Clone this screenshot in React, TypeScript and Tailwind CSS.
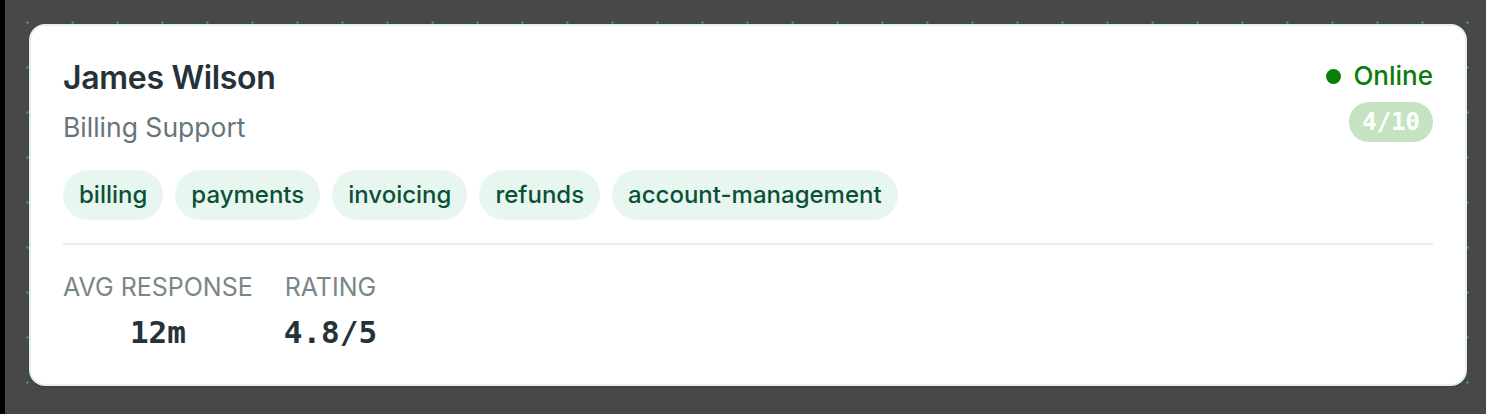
const tags = ['billing', 'payments', 'invoicing', 'refunds', 'account-management']

const stats = [
  { label: 'AVG RESPONSE', value: '12m' },
  { label: 'RATING', value: '4.8/5' },
]

export default function App() {
  return (
    <div
      className="h-[414px] w-full border-l-[5px] border-black bg-[#484848] bg-[radial-gradient(circle,#3b9078_1px,transparent_1.5px)] bg-[length:45px_45px] pt-6 pl-6"
      style={{ fontFamily: 'Inter, "Noto Sans", sans-serif' }}
    >
      <div className="w-[1438px] rounded-[16px] border-2 border-[#e4f0ed] bg-white p-8 pb-[34px] shadow-sm">
        {/* Шапка: имя, роль и статус */}
        <div className="flex items-start justify-between">
          <div>
            <h2 className="text-[32px] leading-[40px] font-semibold tracking-[-0.01em] text-[#263238]">
              James Wilson
            </h2>
            <p className="mt-[13px] text-[26.5px] leading-[32px] text-[#66757a]">Billing Support</p>
          </div>
          <div className="flex flex-col items-end">
            <div className="flex items-center gap-3 pt-[2px]">
              <span className="h-[15px] w-[15px] rounded-full bg-[#0a7d0a]" />
              <span className="text-[26px] leading-[32px] font-medium text-[#0a7d0a]">Online</span>
            </div>
            <span
              className="mt-[10px] rounded-full bg-[#c5e3c3] px-[13px] text-[24px] leading-[40px] font-bold text-white"
              style={{ fontFamily: '"DejaVu Sans Mono", "Liberation Mono", monospace' }}
            >
              4/10
            </span>
          </div>
        </div>

        {/* Теги */}
        <div className="mt-[27px] flex flex-wrap gap-3">
          {tags.map((tag) => (
            <span
              key={tag}
              className="rounded-full bg-[#e8f6f0] px-4 text-[24px] leading-[50px] font-medium text-[#0b5138]"
            >
              {tag}
            </span>
          ))}
        </div>

        <div className="mt-[23px] h-[2px] bg-[#e4f0ed]" />

        {/* Статистика */}
        <div className="mt-[27px] flex gap-[31px]">
          {stats.map((s) => (
            <div key={s.label} className="flex flex-col items-center">
              <span className="text-[25px] leading-[30px] text-[#7a868a]">{s.label}</span>
              <span
                className="mt-[12px] text-[31px] leading-[36px] font-bold text-[#263238]"
                style={{ fontFamily: '"DejaVu Sans Mono", "Liberation Mono", monospace' }}
              >
                {s.value}
              </span>
            </div>
          ))}
        </div>
      </div>
    </div>
  )
}
